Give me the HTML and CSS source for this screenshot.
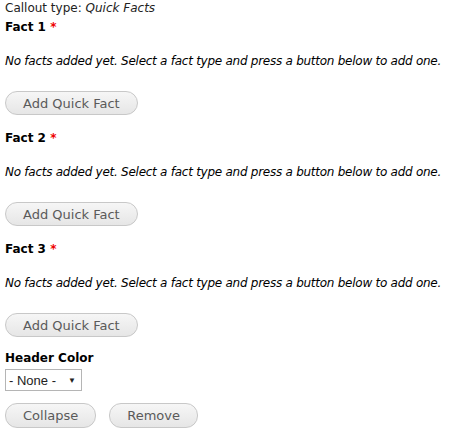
FILE: index.html
```html
<!DOCTYPE html>
<html>
<head>
<meta charset="utf-8">
<link rel="stylesheet" href="styles.css">
</head>
<body>
<div class="page">
  <div class="type">Callout type: <em>Quick Facts</em></div>
  <div class="fact">
    <div class="label">Fact 1 <span class="req">*</span></div>
    <p class="empty">No facts added yet. Select a fact type and press a button below to add one.</p>
    <button class="btn">Add Quick Fact</button>
  </div>
  <div class="fact">
    <div class="label">Fact 2 <span class="req">*</span></div>
    <p class="empty">No facts added yet. Select a fact type and press a button below to add one.</p>
    <button class="btn">Add Quick Fact</button>
  </div>
  <div class="fact">
    <div class="label">Fact 3 <span class="req">*</span></div>
    <p class="empty">No facts added yet. Select a fact type and press a button below to add one.</p>
    <button class="btn">Add Quick Fact</button>
  </div>
  <div class="color">
    <div class="label">Header Color</div>
    <div class="select"><span>- None -</span><span class="arrow">▼</span></div>
  </div>
  <div class="actions">
    <button class="btn">Collapse</button>
    <button class="btn">Remove</button>
  </div>
</div>
</body>
</html>
```
FILE: styles.css
```css
html, body {
  margin: 0;
  padding: 0;
  background: #fff;
}
.page {
  font-family: "DejaVu Sans", sans-serif;
  font-size: 12px;
  color: #000;
  padding: 0 5px;
}
.type {
  line-height: 16px;
  color: #222;
}
.type em {
  font-style: italic;
}
.fact {
  display: flex;
  flex-direction: column;
  align-items: flex-start;
}
.label {
  font-weight: bold;
  line-height: 16px;
  margin-top: 3px;
}
.req {
  color: #e00;
}
.empty {
  font-style: italic;
  margin: 18px 0 0;
  line-height: 16px;
  letter-spacing: -0.26px;
  white-space: nowrap;
}
.btn {
  font-family: "DejaVu Sans", sans-serif;
  font-size: 13px;
  color: #5a5a5a;
  background: linear-gradient(#f6f6f6, #e6e6e6);
  border: 1px solid #c8c8c8;
  border-radius: 12px;
  height: 24px;
  padding: 0 17px;
  margin-top: 22px;
  margin-bottom: 12px;
}
.color .label {
  margin-top: 1px;
}
.select {
  display: inline-flex;
  align-items: center;
  gap: 12px;
  margin-top: 3px;
  height: 22px;
  box-sizing: border-box;
  border: 1px solid #b5b5b5;
  padding: 0 5px 0 3px;
  font-family: "Liberation Sans", Arial, sans-serif;
  font-size: 13px;
  color: #222;
}
.arrow {
  font-size: 8px;
}
.actions {
  display: flex;
  gap: 13px;
}
.actions .btn {
  margin-top: 12px;
  height: 25px;
  padding: 0 17px;
}
```
